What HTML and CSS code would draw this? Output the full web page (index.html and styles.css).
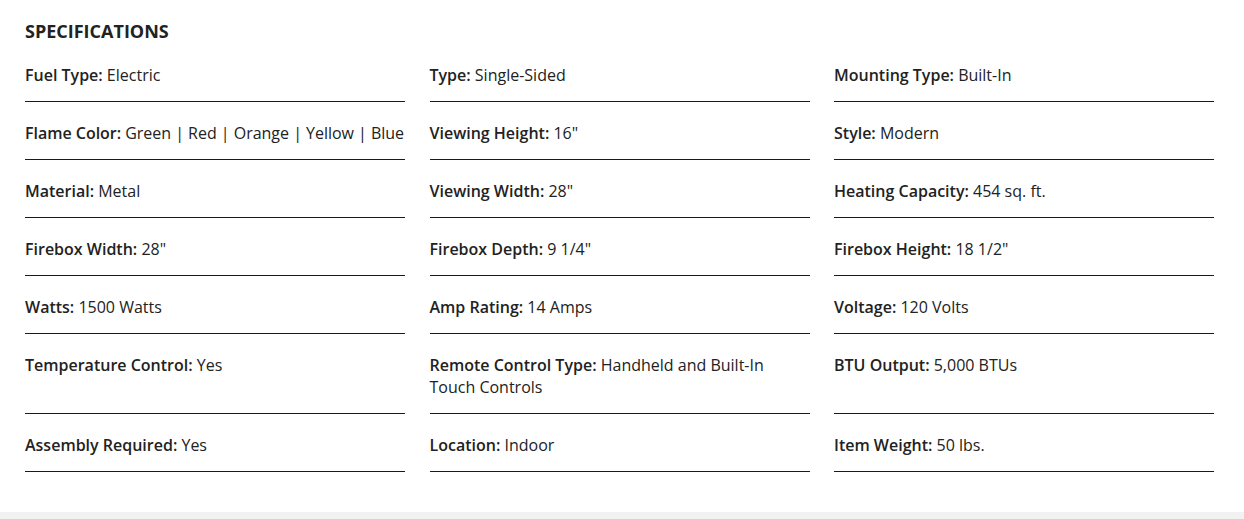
FILE: index.html
```html
<!DOCTYPE html>
<html>
<head>
<meta charset="utf-8">
<link rel="stylesheet" href="styles.css">
</head>
<body>
<section class="specs">
  <h2 class="specs-title">SPECIFICATIONS</h2>
  <div class="specs-grid">
    <div class="spec"><b>Fuel Type:</b> Electric</div>
    <div class="spec"><b>Type:</b> Single-Sided</div>
    <div class="spec"><b>Mounting Type:</b> Built-In</div>
    <div class="spec spec-nowrap"><b>Flame Color:</b> Green | Red | Orange | Yellow | Blue</div>
    <div class="spec"><b>Viewing Height:</b> 16"</div>
    <div class="spec"><b>Style:</b> Modern</div>
    <div class="spec"><b>Material:</b> Metal</div>
    <div class="spec"><b>Viewing Width:</b> 28"</div>
    <div class="spec"><b>Heating Capacity:</b> 454 sq. ft.</div>
    <div class="spec"><b>Firebox Width:</b> 28"</div>
    <div class="spec"><b>Firebox Depth:</b> 9 1/4"</div>
    <div class="spec"><b>Firebox Height:</b> 18 1/2"</div>
    <div class="spec"><b>Watts:</b> 1500 Watts</div>
    <div class="spec"><b>Amp Rating:</b> 14 Amps</div>
    <div class="spec"><b>Voltage:</b> 120 Volts</div>
    <div class="spec"><b>Temperature Control:</b> Yes</div>
    <div class="spec"><b>Remote Control Type:</b> Handheld and Built-In Touch Controls</div>
    <div class="spec"><b>BTU Output:</b> 5,000 BTUs</div>
    <div class="spec"><b>Assembly Required:</b> Yes</div>
    <div class="spec"><b>Location:</b> Indoor</div>
    <div class="spec"><b>Item Weight:</b> 50 lbs.</div>
  </div>
</section>
<div class="footer-band"></div>
</body>
</html>
```
FILE: styles.css
```css
html, body {
  margin: 0;
  padding: 0;
  background: #fff;
}
body {
  font-family: "Open Sans", "Liberation Sans", sans-serif;
  color: #222;
  width: 1244px;
  height: 519px;
  display: flex;
  flex-direction: column;
}
.specs {
  padding: 19px 30px 0 25px;
  flex: 1;
}
.specs-title {
  margin: 0 0 21px;
  font-size: 18px;
  line-height: 24px;
  font-weight: 700;
  color: #222;
}
.specs-grid {
  width: 1189px;
  display: grid;
  grid-template-columns: repeat(3, 1fr);
  column-gap: 24.5px;
  row-gap: 20px;
}
.spec {
  font-size: 16px;
  line-height: 22px;
  padding-bottom: 15px;
  border-bottom: 1px solid #1a1a1a;
}
.spec-nowrap {
  white-space: nowrap;
  letter-spacing: -0.02px;
}
.spec b {
  font-weight: 600;
}
.footer-band {
  height: 7px;
  background: #f2f2f2;
}
```
